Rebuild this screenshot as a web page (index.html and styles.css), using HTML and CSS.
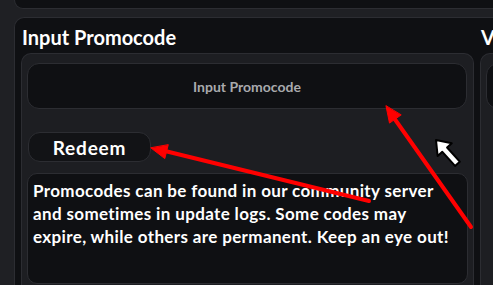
FILE: index.html
```html
<!DOCTYPE html>
<html>
  <head>
    <title>Promocodes</title>
    <link rel="stylesheet" href="styles.css">
  </head>
  <body>
    <div class="page">
      <div class="topbar"></div>

      <div class="card">
        <div class="columns">
          <div class="column">
            <h2 class="title">Input Promocode</h2>
            <div class="panel">
              <div class="code-input">Input Promocode</div>
              <button class="redeem">Redeem</button>
              <div class="info">
                Promocodes can be found in our community server<br>
                and sometimes in update logs. Some codes may<br>
                expire, while others are permanent. Keep an eye out!
              </div>
            </div>
          </div>

          <div class="column">
            <h2 class="title">Verify</h2>
            <div class="panel">
              <div class="code-input"></div>
            </div>
          </div>
        </div>
      </div>
    </div>

    <!-- annotations drawn on top of the screenshot -->
    <svg class="overlay" width="493" height="285" viewBox="0 0 493 285">
      <g stroke="#ff0000" stroke-width="4" stroke-linecap="round" fill="#ff0000">
        <line x1="369" y1="201" x2="165" y2="151" />
        <polygon points="151,148 164.8,158.6 168.2,145" stroke-width="1" />
        <line x1="471" y1="227" x2="394" y2="118" />
        <polygon points="386,106 389.5,123.1 400.9,115.1" stroke-width="1" />
      </g>
      <g transform="translate(436 140) rotate(-42)">
        <polygon points="0,0 9.5,13 3.2,13 3.2,32 -3.2,32 -3.2,13 -9.5,13" fill="#fff" stroke="#000" stroke-width="2" stroke-linejoin="round" />
      </g>
    </svg>
  </body>
</html>
```

FILE: styles.css
```css
body {
  margin: 0;
  background-color: #1f2024;
  font-family: Lato, "Liberation Sans", sans-serif;
  color: #fff;
  overflow: hidden;
}

.page {
  width: 960px;
  height: 285px;
  padding-left: 14px;
  display: flex;
  flex-direction: column;
  gap: 8px;
}

.topbar {
  height: 8px;
  background-color: #0f1013;
  border: 1px solid #2c2d32;
  border-top: none;
  border-radius: 0 0 10px 10px;
}

.card {
  flex: 1;
  background-color: #0f1013;
  border: 1px solid #2c2d32;
  border-bottom: none;
  border-radius: 10px 10px 0 0;
  padding: 0 6px;
}

.columns {
  display: grid;
  grid-template-columns: 453px 453px;
  gap: 6px;
  height: 100%;
}

.column {
  display: flex;
  flex-direction: column;
}

.title {
  margin: 0;
  padding: 7px 0 4px 1px;
  font-size: 20px;
  line-height: 24px;
  font-weight: bold;
}

.panel {
  flex: 1;
  background-color: #1d1e22;
  border: 1px solid #2c2d32;
  border-bottom: none;
  border-radius: 10px 10px 0 0;
  padding: 9px 6px 0 5px;
  display: flex;
  flex-direction: column;
  align-items: flex-start;
}

.code-input {
  align-self: stretch;
  height: 44px;
  background-color: #0f1013;
  border: 1px solid #2c2d32;
  border-radius: 12px;
  display: flex;
  align-items: center;
  justify-content: center;
  color: #a9aaad;
  font-size: 14px;
  font-weight: bold;
}

.redeem {
  margin: 23px 0 0 1px;
  width: 123px;
  height: 30px;
  background-color: #121316;
  border: 1px solid #2c2d32;
  border-radius: 12px;
  color: #fff;
  font-family: inherit;
  font-size: 19px;
  letter-spacing: 0.8px;
  font-weight: bold;
  padding: 0;
}

.info {
  margin-top: 11px;
  width: 429px;
  height: 98px;
  background-color: #0f1013;
  border: 1px solid #2c2d32;
  border-radius: 10px;
  padding: 5px 5px 6px 5px;
  font-size: 17px;
  letter-spacing: 0.36px;
  line-height: 23px;
  font-weight: bold;
}

.overlay {
  position: absolute;
  left: 0;
  top: 0;
}
```
